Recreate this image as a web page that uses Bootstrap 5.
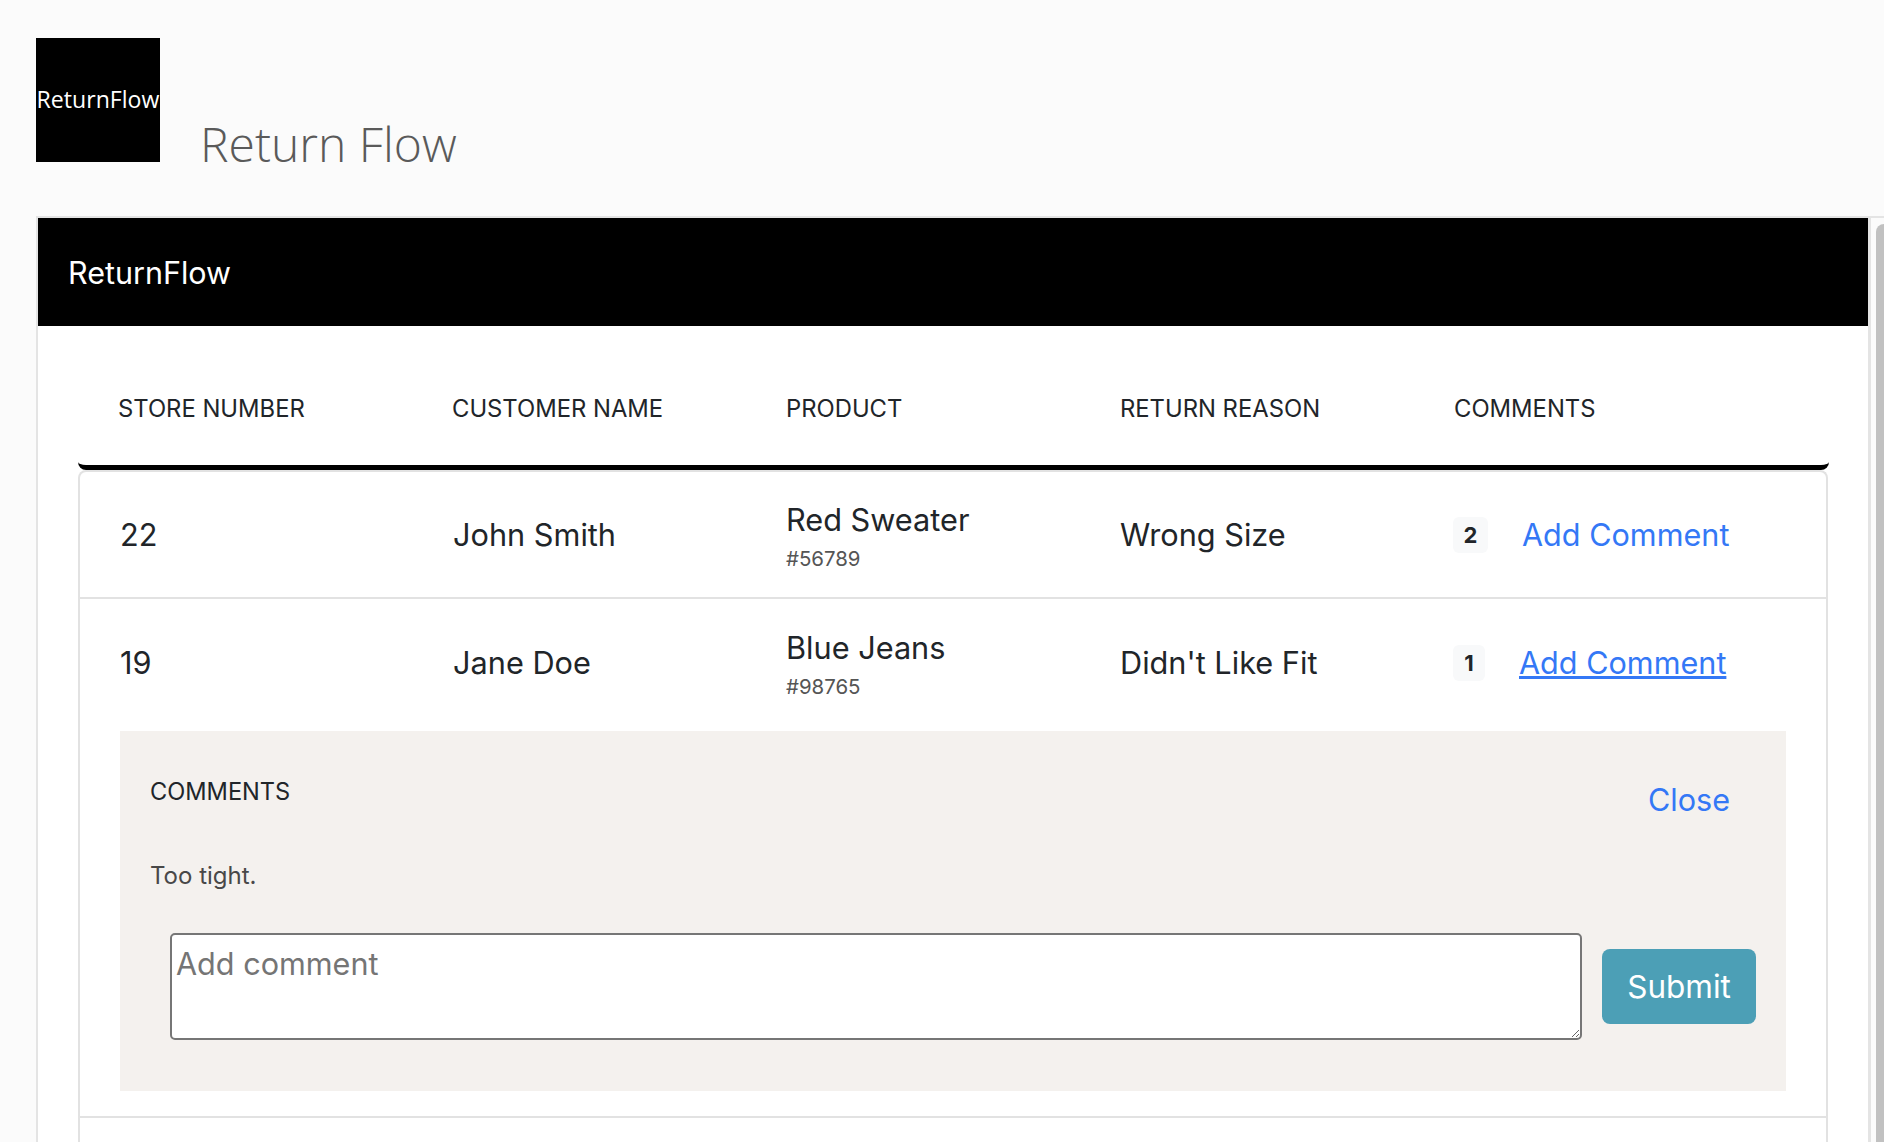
<!DOCTYPE html>
<html lang="en"><head><meta charset="utf-8"><title>Return Flow</title>
<link href="https://cdn.jsdelivr.net/npm/bootstrap@5.3.0/dist/css/bootstrap.min.css" rel="stylesheet">
<style>
html,body{height:100%;overflow:hidden}
body{background:#fbfbfb;font-family:"Inter","Liberation Sans",sans-serif;color:#212529;display:flex;flex-direction:column}
.top-head{padding:38px 0 0 36px;height:216px;flex:none}
.logo-box{width:124px;height:124px;background:#000;color:#fff;font:23.1px/1 "Open Sans",sans-serif;display:flex;align-items:center;justify-content:center;white-space:nowrap}
.page-title{font:300 48px/.76 "Open Sans",sans-serif;color:#5a5a5a;margin:0 0 0 40px}
.frame-wrap{flex:1;min-height:0;border-top:2px solid #e4e4e4;margin-left:36px;display:flex}
.app-frame{flex:1;background:#fff;border-left:2px solid #e4e4e4;border-right:3px solid #e4e4e4;display:flex;flex-direction:column}
.app-bar{background:#000;color:#fff;height:108px;font-size:30.5px;padding:1px 30px 0;display:flex;align-items:center}
.table-area{padding:0 40px;flex:1;display:flex;flex-direction:column}
.head-row{height:144px;padding-top:26px;border-bottom:5px solid #000;border-radius:0 0 8px 8px;display:grid;grid-template-columns:repeat(5,334px);padding-left:40px;align-items:center;font-size:23.8px;margin-right:-1px}
.rows-box{flex:1;border:2px solid #e2e2e2;border-bottom:0;border-radius:8px 8px 0 0}
.data-row{display:grid;grid-template-columns:333px 333px 334px 333px 1fr;padding-left:40px;align-items:center;font-size:30.7px;line-height:1.2}
.row-one{height:127px;padding-top:2px;border-bottom:2px solid #e2e2e2}
.row-two{height:132px;padding-bottom:3px}
.prod-cell{padding-top:2px}
.sub-num{font-size:20.4px;color:#555;margin-top:8px}
.count-chip{background:#f8f9fa;font-size:22px;font-weight:700;border-radius:6px;height:36px;display:inline-flex;align-items:center;justify-content:center;line-height:1}
.chip-two{width:35px;margin-right:34px}
.chip-one{width:32px;margin-right:34px}
.action-link{font-size:30.6px;color:#3478f6;text-decoration:none}
.panel-zone{padding:0 40px 25px;border-bottom:2px solid #e2e2e2}
.comment-panel{background:#f4f1ee;height:360px;padding:0 30px}
.panel-head{display:flex;justify-content:space-between;height:130px;padding:46px 26px 0 0}
.panel-label{font-size:23.6px;line-height:30px}
.comment-text{font-size:24px;color:#484848;margin:0;line-height:30px;height:72px}
.comment-form{display:flex;align-items:center;gap:20px;padding-left:20px}
.comment-box{flex:1;height:107px;border:2px solid #767676;border-radius:5px;font-size:30.6px;padding:6px 4px 0;line-height:1.5;color:#212529;font-family:inherit;background:#fff}
.comment-box::placeholder{color:#757575;opacity:1}
.send-btn{background:#4c9fb6;border:0;border-radius:8px;color:#fff;font-size:31.5px;width:154px;height:75px;padding:0}
.scroll-gutter{width:13px;flex:none;padding:6px 0 0 5px}
.scroll-thumb{height:100%;background:#c1c1c1;border-radius:8px 0 0 0}
</style></head>
<body>
<header class="top-head"><div class="d-flex align-items-end"><div class="logo-box">ReturnFlow</div><h1 class="page-title">Return Flow</h1></div></header>
<div class="frame-wrap">
<main class="app-frame">
<div class="app-bar">ReturnFlow</div>
<div class="table-area">
<div class="head-row"><span>STORE NUMBER</span><span>CUSTOMER NAME</span><span>PRODUCT</span><span>RETURN REASON</span><span>COMMENTS</span></div>
<div class="rows-box">
<div class="data-row row-one"><span>22</span><span>John Smith</span><div class="prod-cell"><div>Red Sweater</div><div class="sub-num">#56789</div></div><span>Wrong Size</span><div class="d-flex align-items-center"><span class="count-chip chip-two">2</span><a href="#" class="action-link">Add Comment</a></div></div>
<div class="data-row row-two"><span>19</span><span>Jane Doe</span><div class="prod-cell"><div>Blue Jeans</div><div class="sub-num">#98765</div></div><span>Didn't Like Fit</span><div class="d-flex align-items-center"><span class="count-chip chip-one">1</span><a href="#" class="action-link text-decoration-underline">Add Comment</a></div></div>
<div class="panel-zone"><div class="comment-panel">
<div class="panel-head"><span class="panel-label">COMMENTS</span><a href="#" class="action-link">Close</a></div>
<p class="comment-text">Too tight.</p>
<form class="comment-form" onsubmit="return false"><textarea class="comment-box" placeholder="Add comment"></textarea><button class="send-btn">Submit</button></form>
</div></div>
</div>
</div>
</main>
<div class="scroll-gutter"><div class="scroll-thumb"></div></div>
</div>
</body></html>
